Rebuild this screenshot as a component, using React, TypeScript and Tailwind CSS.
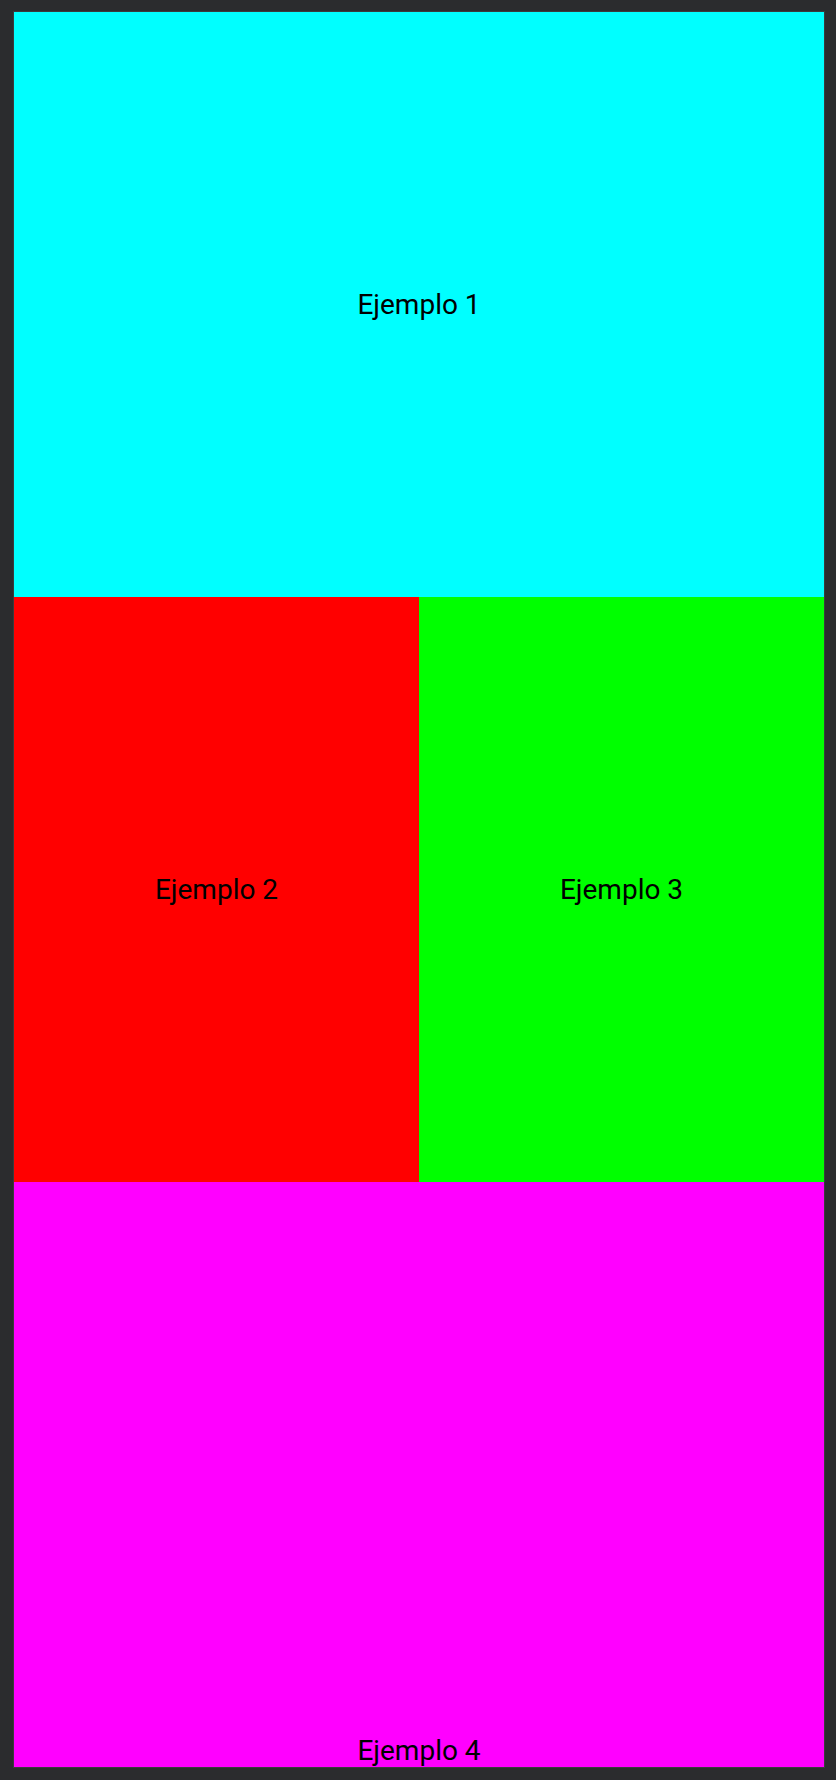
export default function App() {
  return (
    <div
      className="h-[1780px] w-[836px] bg-[#2b2c2e] pt-[11px] pl-[13px] pr-[11px] pb-[12px]"
      style={{ fontFamily: 'Roboto, "Noto Sans", sans-serif' }}
    >
      <div className="h-full w-full border border-[#3a3b3d]">
        <div className="grid h-full w-full grid-cols-2 grid-rows-3 text-[28px] text-black">
          <div className="col-span-2 flex items-center justify-center bg-[#00ffff]">Ejemplo 1</div>
          <div className="flex items-center justify-center bg-[#ff0000]">Ejemplo 2</div>
          <div className="flex items-center justify-center bg-[#00ff00]">Ejemplo 3</div>
          <div className="col-span-2 flex items-end justify-center bg-[#ff00ff] leading-[1.1]">Ejemplo 4</div>
        </div>
      </div>
    </div>
  )
}
